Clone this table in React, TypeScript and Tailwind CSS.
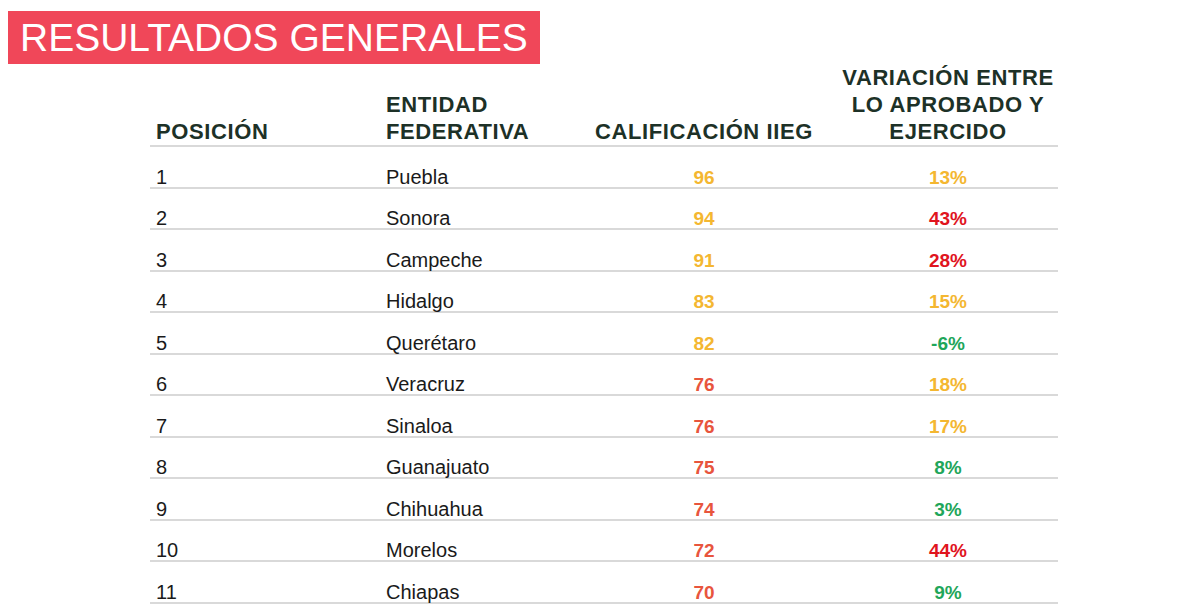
type Tone = "yellow" | "orange" | "red" | "green";

interface Row {
  pos: number;
  state: string;
  score: number;
  scoreTone: Tone;
  variation: string;
  variationTone: Tone;
}

const toneClass: Record<Tone, string> = {
  yellow: "text-[#f4b731]",
  orange: "text-[#e8553d]",
  red: "text-[#e0141e]",
  green: "text-[#1fa65a]",
};

const rows: Row[] = [
  { pos: 1, state: "Puebla", score: 96, scoreTone: "yellow", variation: "13%", variationTone: "yellow" },
  { pos: 2, state: "Sonora", score: 94, scoreTone: "yellow", variation: "43%", variationTone: "red" },
  { pos: 3, state: "Campeche", score: 91, scoreTone: "yellow", variation: "28%", variationTone: "red" },
  { pos: 4, state: "Hidalgo", score: 83, scoreTone: "yellow", variation: "15%", variationTone: "yellow" },
  { pos: 5, state: "Querétaro", score: 82, scoreTone: "yellow", variation: "-6%", variationTone: "green" },
  { pos: 6, state: "Veracruz", score: 76, scoreTone: "orange", variation: "18%", variationTone: "yellow" },
  { pos: 7, state: "Sinaloa", score: 76, scoreTone: "orange", variation: "17%", variationTone: "yellow" },
  { pos: 8, state: "Guanajuato", score: 75, scoreTone: "orange", variation: "8%", variationTone: "green" },
  { pos: 9, state: "Chihuahua", score: 74, scoreTone: "orange", variation: "3%", variationTone: "green" },
  { pos: 10, state: "Morelos", score: 72, scoreTone: "orange", variation: "44%", variationTone: "red" },
  { pos: 11, state: "Chiapas", score: 70, scoreTone: "orange", variation: "9%", variationTone: "green" },
];

const gridCols = "grid grid-cols-[230px_210px_228px_240px]";

export default function App() {
  return (
    <div className="w-[1200px] h-[608px] overflow-hidden bg-white pt-[11px] pl-[8px] font-['Liberation_Sans',Arial,sans-serif]">
      <div className="inline-block bg-[#f04759] pl-[12px] pr-[12px] h-[53px] text-[39px] leading-[53px] text-white whitespace-nowrap">
        RESULTADOS GENERALES
      </div>

      <div className="ml-[142px] w-[908px]">
        {/* Header */}
        <div
          className={`${gridCols} items-end border-b-2 border-[#d9d9d9] text-[22px] leading-[27px] font-bold tracking-[0.6px] text-[#1d3127]`}
        >
          <div className="pl-[6px]">POSICIÓN</div>
          <div className="pl-[6px]">
            ENTIDAD
            <br />
            FEDERATIVA
          </div>
          <div className="text-center whitespace-nowrap">CALIFICACIÓN IIEG</div>
          <div className="pl-[20px] text-center whitespace-nowrap">
            VARIACIÓN ENTRE
            <br />
            LO APROBADO Y
            <br />
            EJERCIDO
          </div>
        </div>

        {/* Rows */}
        {rows.map((row) => (
          <div
            key={row.pos}
            className={`${gridCols} items-end h-[41.5px] border-b-2 border-[#d9d9d9] leading-none`}
          >
            <div className="pl-[6px] text-[20px] text-[#1a1a1a]">{row.pos}</div>
            <div className="pl-[6px] text-[20px] text-[#1a1a1a]">{row.state}</div>
            <div className={`text-center text-[19px] font-bold ${toneClass[row.scoreTone]}`}>
              {row.score}
            </div>
            <div
              className={`pl-[20px] text-center text-[19px] font-bold ${toneClass[row.variationTone]}`}
            >
              {row.variation}
            </div>
          </div>
        ))}
      </div>
    </div>
  );
}
